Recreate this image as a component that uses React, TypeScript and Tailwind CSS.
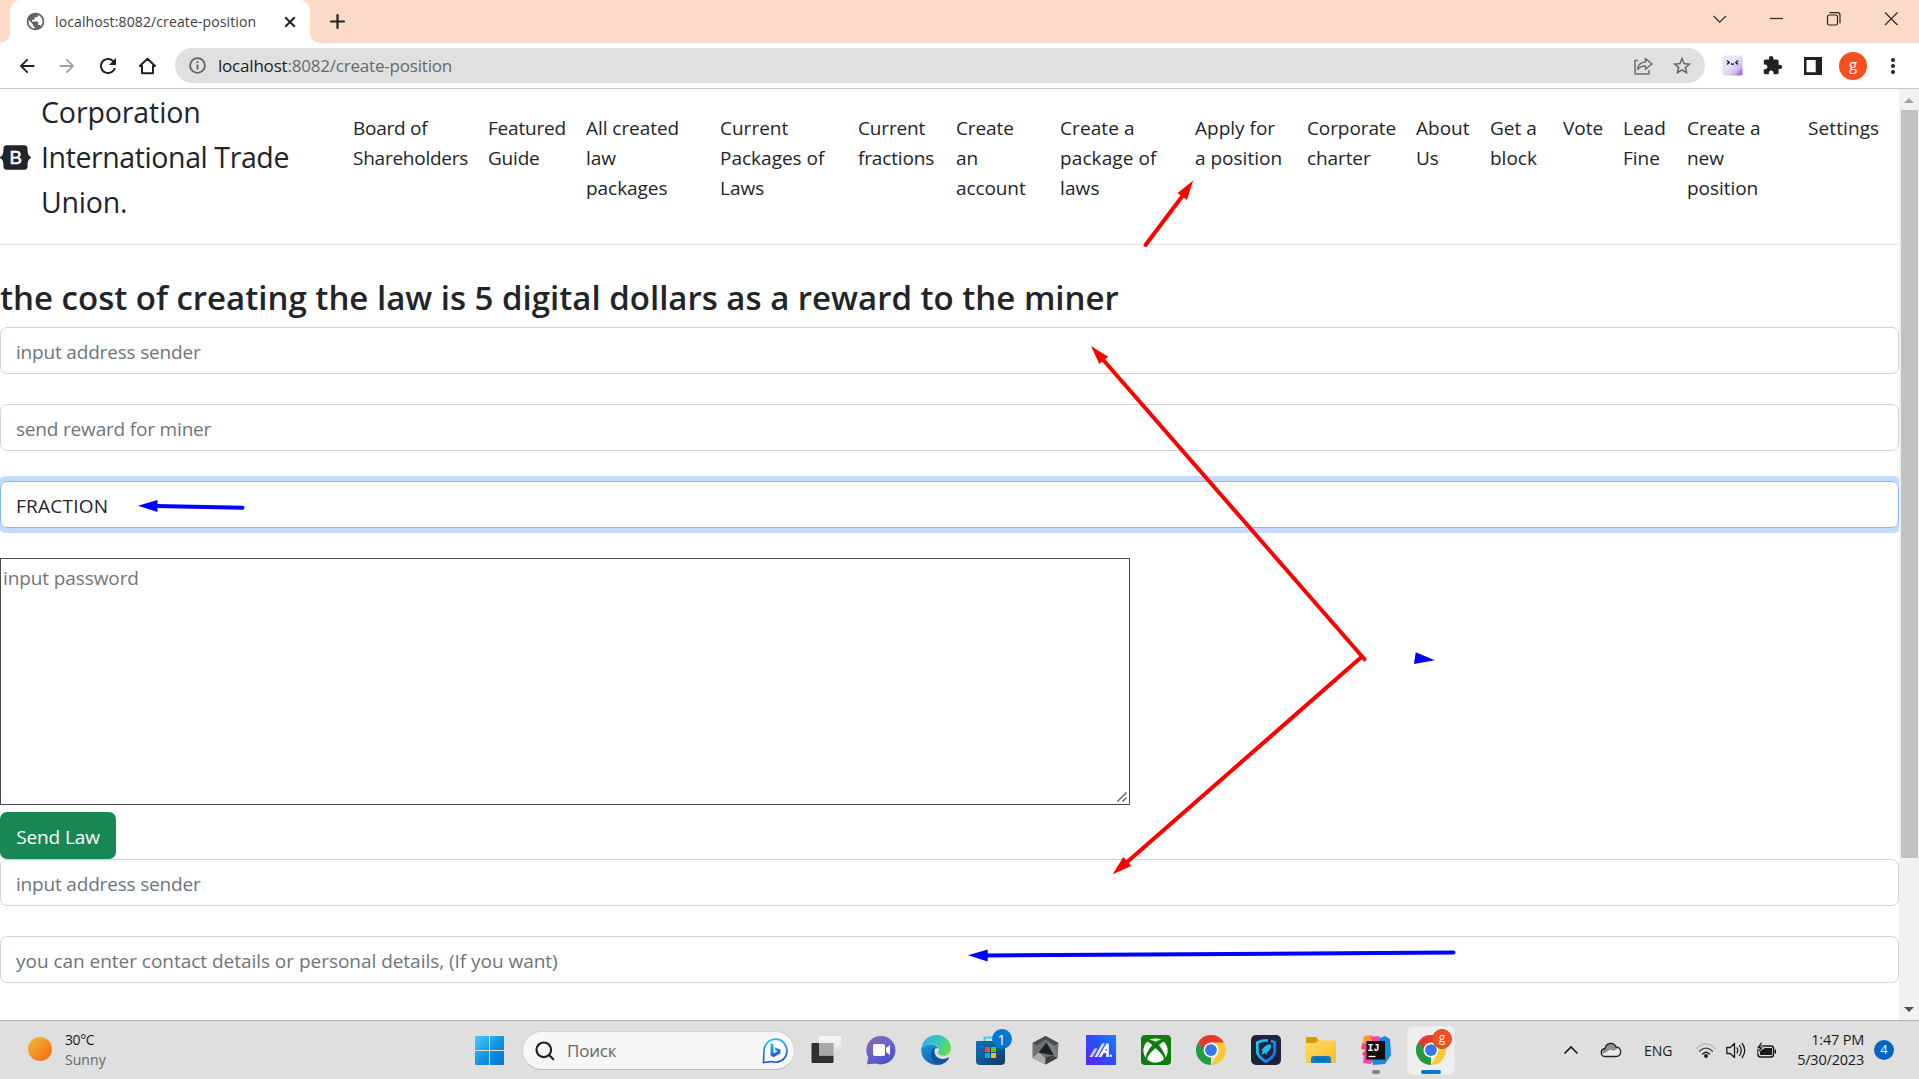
import React from "react";
import { MdArrowBack, MdArrowForward, MdExtension, MdPublic, MdRefresh, MdStarBorder } from "react-icons/md";
import { FaXbox } from "react-icons/fa";

const navItems = [
  { lines: ["Board of", "Shareholders"], width: "w-[135px] tracking-[-0.25px]" },
  { lines: ["Featured", "Guide"], width: "w-[98px] tracking-[-0.2px]" },
  { lines: ["All created", "law", "packages"], width: "w-[134px] tracking-[-0.05px]" },
  { lines: ["Current", "Packages of", "Laws"], width: "w-[138px] tracking-[0px]" },
  { lines: ["Current", "fractions"], width: "w-[98px] tracking-[-0.15px]" },
  { lines: ["Create", "an", "account"], width: "w-[104px] tracking-[-0.1px]" },
  { lines: ["Create a", "package of", "laws"], width: "w-[135px] tracking-[0.1px]" },
  { lines: ["Apply for", "a position"], width: "w-[112px] tracking-[0px]" },
  { lines: ["Corporate", "charter"], width: "w-[109px] tracking-[-0.1px]" },
  { lines: ["About", "Us"], width: "w-[74px] tracking-[0px]" },
  { lines: ["Get a", "block"], width: "w-[73px] tracking-[0px]" },
  { lines: ["Vote"], width: "w-[60px] tracking-[0px]" },
  { lines: ["Lead", "Fine"], width: "w-[64px] tracking-[0px]" },
  { lines: ["Create a", "new", "position"], width: "w-[121px] tracking-[-0.05px]" },
  { lines: ["Settings"], width: "w-[80px] tracking-[0.1px]" },
];

function TabStrip() {
  return (
    <div className="flex h-[43px] shrink-0 justify-between bg-[#fcdac8]">
      <div className="flex">
        <div className="h-[43px] w-[10px] bg-white">
          <div className="h-full w-full rounded-br-[10px] bg-[#fcdac8]" />
        </div>
        <div className="flex h-[43px] w-[300px] items-center rounded-t-[10px] bg-white pl-[15px]">
          <MdPublic className="size-[21px] text-[#5f6368]" />
          <span className="ml-[9px] w-[225px] whitespace-nowrap text-[14px] tracking-[0.12px] text-[#3c4043]">
            localhost:8082/create-position
          </span>
          <svg width="20" height="20" viewBox="0 0 20 20" stroke="#202124" strokeWidth="2">
            <path d="M5.200 5.200l9.600 9.600M14.800 5.200l-9.600 9.600" />
          </svg>
        </div>
        <div className="h-[43px] w-[10px] bg-white">
          <div className="h-full w-full rounded-bl-[10px] bg-[#fcdac8]" />
        </div>
        <svg className="mt-[13px] ml-[9px]" width="17" height="17" viewBox="0 0 17 17" stroke="#202124" strokeWidth="2.2" strokeLinecap="round">
          <path d="M8.5 2v13M2 8.5h13" />
        </svg>
      </div>
      <div className="flex h-[37px] items-center gap-[37px] pr-[18px] text-[#2b2522]">
        <svg width="20" height="20" viewBox="0 0 20 20" fill="none" stroke="currentColor" strokeWidth="1.100">
          <path d="M3.500 7l6.200 6.200L16 7" />
        </svg>
        <svg width="20" height="20" viewBox="0 0 20 20" stroke="currentColor" strokeWidth="1.200">
          <path d="M3 9.500h13" />
        </svg>
        <svg width="20" height="20" viewBox="0 0 20 20" fill="none" stroke="currentColor" strokeWidth="1.200">
          <rect x="3.500" y="6" width="10" height="10" rx="1.500" />
          <path d="M5.500 3.700h8a2.500 2.500 0 0 1 2.500 2.500v8" />
        </svg>
        <svg width="20" height="20" viewBox="0 0 20 20" stroke="currentColor" strokeWidth="1.100">
          <path d="M4 3.500l12.500 12.500M16.500 3.500L4 16" />
        </svg>
      </div>
    </div>
  );
}

function Toolbar() {
  return (
    <div className="flex h-[46px] shrink-0 items-center border-b border-[#c9c9c9] bg-white">
      <div className="flex w-[175px] items-center gap-[18px] pl-4 text-[#202124]">
        <MdArrowBack className="size-[22px]" />
        <MdArrowForward className="size-[22px] text-[#a0a0a0]" />
        <MdRefresh className="size-[24px]" />
        <svg className="-ml-px" width="20" height="20" viewBox="0 0 20 20" fill="none" stroke="currentColor" strokeWidth="2" strokeLinejoin="round">
          <path d="M2.800 10L10.500 2.800l7.500 7.200h-2v7.200h-11V10z" />
        </svg>
      </div>
      <div className="flex h-[35px] w-[1530px] items-center rounded-full bg-[#e0e0e0] pl-[14px]">
        <svg width="17" height="17" viewBox="0 0 17 17" fill="none" stroke="#5f6368" strokeWidth="1.800">
          <circle cx="8.500" cy="8.500" r="7.400" />
          <path d="M8.500 7.500v5M8.500 4.200v1.800" />
        </svg>
        <div className="ml-3 w-[1415px] text-[17px] tracking-[-0.2px] text-[#65696d]">
          <span className="text-[#202124]">localhost</span>:8082/create-position
        </div>
        <svg width="20" height="20" viewBox="0 0 20 20" fill="none" stroke="#6b6e72" strokeWidth="1.500" strokeLinejoin="round">
          <path d="M5 4.500H2V18h14v-4" />
          <path d="M4.500 13.500C5 8.500 8 6.200 12.500 6V2.500L19 8l-6.500 5.200V9.900C9 9.800 6.500 11 4.500 13.500z" />
        </svg>
        <MdStarBorder className="ml-[18px] size-[22px] text-[#5f6368]" />
      </div>
      <div className="flex items-center pl-[17px] text-[#202124]">
        <svg width="21" height="21" viewBox="0 0 21 21">
          <defs>
            <linearGradient id="ext" x1="0" y1="0" x2="1" y2="1">
              <stop offset="0.450" stopColor="#e3e6f6" />
              <stop offset="0.750" stopColor="#cdb5ef" />
              <stop offset="1" stopColor="#9640dc" />
            </linearGradient>
          </defs>
          <rect x="0.500" y="0.500" width="20" height="20" rx="2" fill="url(#ext)" />
          <path d="M5 5.500l2.200 2L5 9.400M16 5.500l-2.200 2 2.200 1.900M9 8.500q1.500 1.800 3 0" fill="none" stroke="#20222e" strokeWidth="1.400" />
        </svg>
        <MdExtension className="ml-[19px] size-[21px]" />
        <svg className="ml-[21px]" width="18" height="18" viewBox="0 0 18 18">
          <path d="M0 0h18v18H0zM2.500 3v12.200h9.200V3z" fill="#202124" fillRule="evenodd" />
        </svg>
        <div className="ml-[17px] flex size-7 items-center justify-center rounded-full bg-[#f4511e] pb-[3px] text-[15px] text-white">g</div>
        <svg className="ml-[23px]" width="6" height="18" viewBox="0 0 6 18" fill="#202124">
          <circle cx="3" cy="3" r="2" />
          <circle cx="3" cy="9" r="2" />
          <circle cx="3" cy="15" r="2" />
        </svg>
      </div>
    </div>
  );
}

function Field({ text, className = "tracking-[-0.18px]" }: { text: string; className?: string }) {
  return (
    <div className={`flex h-[47px] shrink-0 items-center rounded-[7px] border border-[#ced4da] bg-white pt-1 pl-[15px] text-[19px] text-[#6c757d] ${className}`}>
      {text}
    </div>
  );
}

function PageHeader() {
  return (
    <header className="flex h-[156px] shrink-0 items-start border-b border-[#dee2e6] text-[#212529]">
      <div className="flex w-[353px] items-center">
        <svg className="mt-[1px] shrink-0" width="31" height="25" viewBox="0 0 118 94">
          <path
            fill="#212529"
            d="M24.509 0c-6.733 0-11.715 5.893-11.492 12.284.214 6.14-.064 14.092-2.066 20.577C8.943 39.365 5.547 43.485 0 44.014v5.972c5.547.529 8.943 4.649 10.951 11.153 2.002 6.485 2.28 14.437 2.066 20.577C12.794 88.106 17.776 94 24.51 94H93.5c6.733 0 11.714-5.893 11.491-12.284-.214-6.14.064-14.092 2.066-20.577 2.009-6.504 5.396-10.624 10.943-11.153v-5.972c-5.547-.529-8.934-4.649-10.943-11.153-2.002-6.484-2.28-14.437-2.066-20.577C105.214 5.894 100.233 0 93.5 0H24.508z"
          />
          <text x="60" y="72" textAnchor="middle" fontFamily="Liberation Sans" fontSize="71" fill="#fff" stroke="#fff" strokeWidth="2">B</text>
        </svg>
        <div className="ml-[10px] pt-px text-[28.5px] leading-[45px]">
          <div className="tracking-[-0.1px]">Corporation</div>
          <div className="whitespace-nowrap tracking-[-0.4px]">International Trade</div>
          <div className="tracking-[-0.2px]">Union.</div>
        </div>
      </div>
      <nav className="flex pt-6 text-[19px] leading-[30px]">
        {navItems.map((item, i) => (
          <a key={i} className={`${item.width} shrink-0 whitespace-nowrap`}>
            {item.lines.map((line) => (
              <span key={line} className="block">{line}</span>
            ))}
          </a>
        ))}
      </nav>
    </header>
  );
}

function Page() {
  return (
    <main className="flex w-[1899px] flex-col overflow-hidden">
      <PageHeader />
      <h1 className="mt-[31px] h-[51px] shrink-0 whitespace-nowrap text-[33px] leading-[44px] font-semibold text-[#212529]">
        the cost of creating the law is 5 digital dollars as a reward to the miner
      </h1>
      <div className="flex flex-col gap-[30px]">
        <Field text="input address sender" />
        <Field text="send reward for miner" />
        <div className="flex h-[47px] items-center rounded-[7px] border border-[#86b7fe] pt-1 pl-[15px] text-[19px] tracking-[0.25px] text-[#212529] shadow-[0_0_0_5px_#c2dbfe]">
          FRACTION
        </div>
      </div>
      <div className="mt-[30px] flex h-[247px] w-[1130px] shrink-0 justify-between border border-[#4a4a4a] pt-1 pl-[2px] text-[19px] leading-[30px] tracking-[-0.1px] text-[#757575]">
        input password
        <svg className="mr-[1px] mb-[1px] self-end" width="12" height="12" viewBox="0 0 12 12" stroke="#555" strokeWidth="1.300">
          <path d="M1.500 10.500l9-9M6.500 10.500l4-4" />
        </svg>
      </div>
      <button className="mt-[7px] h-[47px] w-[116px] shrink-0 rounded-[7px] bg-[#198754] pt-[3px] text-[19px] tracking-[-0.1px] text-white">Send Law</button>
      <div className="flex flex-col gap-[30px]">
        <Field text="input address sender" />
        <Field text="you can enter contact details or personal details, (If you want)" className="tracking-[-0.03px]" />
      </div>
    </main>
  );
}

function Scrollbar() {
  return (
    <div className="flex w-5 flex-col items-center justify-between bg-[#f1f1f1]">
      <div className="flex flex-col items-center">
        <svg className="mt-[9px]" width="10" height="5" viewBox="0 0 10 5" fill="#a3a3a3"><path d="M0 5l5-5 5 5z" /></svg>
        <div className="mt-[7px] h-[748px] w-[17px] bg-[#c1c1c1]" />
      </div>
      <svg className="mb-2" width="10" height="5" viewBox="0 0 10 5" fill="#505050"><path d="M0 0l5 5 5-5z" /></svg>
    </div>
  );
}

function Annotations() {
  return (
    <svg className="pointer-events-none absolute inset-0" width="1919" height="1079" viewBox="0 0 1919 1079">
      <g stroke="#f00" fill="#f00" strokeWidth="4" strokeLinecap="round">
        <path d="M1145.500 245L1184 194" />
        <path d="M1193 180.700l-15.500 12.300 9.500 7z" stroke="none" />
        <path d="M1364.500 659.300L1102 358.500" />
        <path d="M1091 346l17 10.700-8.700 7.300z" stroke="none" />
        <path d="M1362 656.500L1126 863" />
        <path d="M1112.700 874.300l10.600-17.300 8 9z" stroke="none" />
      </g>
      <g stroke="#00f" fill="#00f" strokeWidth="4" strokeLinecap="round">
        <path d="M156 506l86.500 1.700" />
        <path d="M138 505.700l19.500-5.700v12z" stroke="none" />
        <path d="M986 955.500l467.500-3" />
        <path d="M968 955.300l19.700-5.800v12z" stroke="none" />
        <path d="M1415.700 652.300l-1.700 11.700 20.700-3.700z" stroke="none" />
      </g>
    </svg>
  );
}

function ChromeLogo() {
  return (
    <svg width="30" height="30" viewBox="0 0 48 48">
      <path d="M24 24L3.200 12A24 24 0 0 1 44.800 12z" fill="#e33b2e" />
      <path d="M24 24L24 48A24 24 0 0 1 3.200 12L13.600 30z" fill="#249a41" />
      <path d="M24 12h20.800A24 24 0 0 1 24 48L34.400 30z" fill="#fcc934" />
      <path d="M3.200 12L13.600 30L24 24V12z" fill="#e33b2e" />
      <path d="M3.200 12L13.600 30L16 24z" fill="#249a41" />
      <circle cx="24" cy="24" r="12" fill="#fff" />
      <circle cx="24" cy="24" r="9.400" fill="#3179ed" />
    </svg>
  );
}

function TaskViewIcon() {
  return (
    <svg width="30" height="30" viewBox="0 0 30 30">
      <defs><linearGradient id="pane" x1="0" y1="0" x2="0" y2="1"><stop stopColor="#fbfbfb" /><stop offset="1" stopColor="#d6d6d6" /></linearGradient></defs>
      <rect x="0.500" y="8" width="22" height="20" rx="1" fill="#30302e" />
      <rect x="8" y="1" width="22" height="19.500" rx="1" fill="url(#pane)" />
      <rect x="8" y="8" width="14.500" height="12.500" fill="#a9a9a9" />
    </svg>
  );
}

function ChatIcon() {
  return (
    <svg width="30" height="30" viewBox="0 0 30 30">
      <defs><linearGradient id="chat" x1="0" y1="0" x2="0.600" y2="1"><stop stopColor="#9664a4" /><stop offset="0.500" stopColor="#6a63cc" /><stop offset="1" stopColor="#4d55c8" /></linearGradient></defs>
      <path d="M15 1a14.200 14.200 0 1 1-5 27.400L1 29.200l1.200-7A14.200 14.200 0 0 1 15 1z" fill="url(#chat)" />
      <rect x="7" y="9" width="12" height="12" rx="1.800" fill="#fff" />
      <path d="M20 13l4-3v10l-4-3z" fill="#fff" />
    </svg>
  );
}

function EdgeIcon() {
  return (
    <svg width="30" height="30" viewBox="0 0 256 256">
      <defs>
        <linearGradient id="e1" x1="0" y1="0.300" x2="1" y2="0.600"><stop stopColor="#2bb4ec" /><stop offset="0.550" stopColor="#35c9b5" /><stop offset="1" stopColor="#67e04b" /></linearGradient>
        <linearGradient id="e2" x1="0" y1="0" x2="0.300" y2="1"><stop stopColor="#1b98db" /><stop offset="1" stopColor="#0d69bb" /></linearGradient>
      </defs>
      <path d="M2 118C10 48 65 0 130 0c74 0 126 52 126 112 0 42-32 64-66 64-30 0-48-10-48-20 0-8 11-12 11-32 0-30-30-50-65-50-42 0-72 20-86 44z" fill="url(#e1)" />
      <path d="M2 118c14-24 44-40 80-40 35 0 62 16 68 38-20-10-46 5-50 34-6 46 36 104 52 105-82 6-156-50-150-137z" fill="url(#e2)" />
      <path d="M120 105c-24 11-38 40-34 70 6 42 36 72 66 80 39-5 67-27 85-53 4-7-2-11-8-8-70 33-132-12-109-89z" fill="#10529c" />
    </svg>
  );
}

function StoreIcon() {
  return (
    <div className="relative">
      <svg width="30" height="30" viewBox="0 0 30 30">
        <defs><linearGradient id="store" x1="0" y1="0" x2="1" y2="1"><stop stopColor="#0676bd" /><stop offset="1" stopColor="#143963" /></linearGradient></defs>
        <path d="M8.500 7V2.500h12V7" fill="none" stroke="#3cc9ee" strokeWidth="2" />
        <path d="M0 7q0-1 1-1h27q1 0 1 1v19q0 4-4 4H4q-4 0-4-4z" fill="url(#store)" />
        <path d="M9 12h5v5H9z" fill="#f25022" /><path d="M15 12h5v5h-5z" fill="#7fba00" />
        <path d="M9 18h5v5H9z" fill="#00a4ef" /><path d="M15 18h5v5h-5z" fill="#ffb900" />
      </svg>
      <div className="absolute -top-[6px] -right-[6px] flex size-5 items-center justify-center rounded-full bg-[#0078d4] text-[14px] text-white">1</div>
    </div>
  );
}

function ArmouryIcon() {
  return (
    <svg width="30" height="30" viewBox="0 0 30 30">
      <path d="M14.500 1l13 7-1 15-12 6.500L1.500 23V8z" fill="#6d7276" />
      <path d="M14.500 1l13 7-4.500 3-8.500-6.500L6 10 1.500 8z" fill="#484d51" />
      <path d="M14.500 4.500L23 11l3.500 12-6-2.500z" fill="#7b8084" />
      <path d="M15.500 7.500l7.500 13-15.500-3z" fill="#1d2023" />
      <path d="M1.500 23L7.500 17.500 14.500 23v6.500z" fill="#a9adae" />
      <path d="M14.500 22L22 21l4.500 2-12 6.500z" fill="#3a3f43" />
    </svg>
  );
}

function AsusIcon() {
  return (
    <svg width="30" height="30" viewBox="0 0 30 30">
      <defs><linearGradient id="asus" x1="1" y1="0" x2="0" y2="1"><stop stopColor="#1783ff" /><stop offset="0.450" stopColor="#284fff" /><stop offset="1" stopColor="#6222ed" /></linearGradient></defs>
      <path d="M0 0h30v30H0z" fill="url(#asus)" />
      <path d="M3.500 22L8.500 13.500h3L6.500 22z" fill="#c9d3ff" />
      <path d="M8.500 22L16 8.500h2.800L11.300 22z" fill="#e6ebff" />
      <path d="M12.500 22L20.500 8.500h2.300V22h-2.600v-4h-2.500L15.300 22z" fill="#fff" />
      <circle cx="20.300" cy="14.800" r="0.900" fill="#2b55fb" />
      <circle cx="24.800" cy="20.700" r="1.200" fill="#fff" />
    </svg>
  );
}

function ShieldIcon() {
  return (
    <svg width="30" height="30" viewBox="0 0 30 30">
      <defs><linearGradient id="shield" x1="0" y1="0" x2="1" y2="0.600"><stop stopColor="#22d3ef" /><stop offset="1" stopColor="#1675fb" /></linearGradient></defs>
      <rect width="30" height="30" rx="5" fill="#1f2339" />
      <path d="M17 5.300C13 5.300 9 6 6.300 7.600v8.600c0 4.500 3.500 7.500 8.700 10.300 5.200-2.800 8.700-5.800 8.700-10.300V7.600c-1-.7-2.200-1.200-3.700-1.600" fill="none" stroke="url(#shield)" strokeWidth="2.800" />
      <path d="M20 9.500c-4-.3-6.500 1.500-8 4.200l-2.500 1.100 2.300.8-1.800 4.400 4.200-2 1 2.600 1-3.500c2.800-1.600 4.200-4.200 3.800-7.600z" fill="#22b9f4" />
    </svg>
  );
}

function FolderIcon() {
  return (
    <svg width="30" height="30" viewBox="0 0 30 30">
      <defs><linearGradient id="folder" x1="0" y1="0" x2="1" y2="1"><stop stopColor="#ffdc66" /><stop offset="1" stopColor="#f8bd28" /></linearGradient></defs>
      <path d="M0 3q0-1 1-1h9l3 3.500L10 9H0z" fill="#d69c08" />
      <path d="M0 8h9l4-2.500h16q1 0 1 1V28H0z" fill="url(#folder)" />
      <path d="M5 28v-4q0-3 3-3h14q3 0 3 3v4z" fill="#1479c8" />
      <path d="M9.500 24.500h11" stroke="#0a559c" strokeWidth="1.500" />
    </svg>
  );
}

function IntelliJIcon() {
  return (
    <svg width="30" height="30" viewBox="0 0 30 30">
      <path d="M3 1l7-1 5 3-8 8-6-2z" fill="#ff9b2b" />
      <path d="M1 9l7-1v18l-7-7 3-4-4-1z" fill="#fc3f7d" />
      <path d="M9 2l8-1 6 4-10 4z" fill="#f342b6" />
      <path d="M19 3l5-2 5 3 1 16-6 9-12 1-1-6z" fill="#168be5" />
      <path d="M3 21l10 3-3 5-8-1z" fill="#ed43aa" />
      <path d="M5.500 6h18.500v18.500H5.500z" fill="#100c0c" />
      <text x="6.500" y="15.500" fontFamily="Liberation Mono" fontWeight="700" fontSize="10" fill="#fff">IJ</text>
      <path d="M7.500 21.500h7" stroke="#fff" strokeWidth="1.300" />
    </svg>
  );
}

function XboxIcon() {
  return (
    <div className="flex size-[30px] items-center justify-center rounded-[4px] bg-[#107c10]">
      <FaXbox className="size-[25px] text-white" />
    </div>
  );
}

const apps = [TaskViewIcon, ChatIcon, EdgeIcon, StoreIcon, ArmouryIcon, AsusIcon, XboxIcon, ChromeLogo, ShieldIcon, FolderIcon];

function Taskbar() {
  return (
    <footer className="flex h-[59px] shrink-0 border-t border-[#b2b2b2] bg-[#dfdfdf]">
      <div className="flex w-[475px] shrink-0 items-start pl-7">
        <div className="mt-4 size-6 rounded-full bg-linear-to-br from-[#edbc36] to-[#f3650d]" />
        <div className="mt-[9px] ml-[13px] text-[14px] leading-5">
          <div className="tracking-[-0.4px] text-[#1b1b1b]">30°C</div>
          <div className="tracking-[0.05px] text-[#666]">Sunny</div>
        </div>
      </div>
      <div className="flex w-[1089px] shrink-0 items-start">
        <svg className="mt-[15px] shrink-0" width="29" height="29" viewBox="0 0 29 29">
          <defs><linearGradient id="win" x1="0" y1="0" x2="1" y2="1"><stop stopColor="#46cdfc" /><stop offset="0.550" stopColor="#1190e2" /><stop offset="1" stopColor="#0873cf" /></linearGradient></defs>
          <path d="M1 0h13v14H0V1q0-1 1-1zM15 0h13q1 0 1 1v13H15zM0 15h14v14H1q-1 0-1-1zM15 15h14v13q0 1-1 1H15z" fill="url(#win)" />
        </svg>
        <div className="mt-[10px] ml-[18px] flex h-[39px] w-[273px] shrink-0 items-center rounded-full border border-[#d2d2d2] border-b-[#bdbdbd] bg-[#f7f7f7] pl-[12px]">
          <svg width="20" height="20" viewBox="0 0 20 20" fill="none" stroke="#222" strokeWidth="2.200" strokeLinecap="round">
            <circle cx="8.800" cy="8.800" r="7.300" /><path d="M14 14l4.300 4.300" />
          </svg>
          <span className="ml-3 w-[195px] text-[17px] tracking-[-0.2px] text-[#666]">Поиск</span>
          <svg width="26" height="26" viewBox="0 0 26 26">
            <defs><linearGradient id="bing" x1="0" y1="0" x2="0.200" y2="1"><stop stopColor="#20c9f4" /><stop offset="0.600" stopColor="#287fe8" /><stop offset="1" stopColor="#1955c5" /></linearGradient></defs>
            <path d="M13.500 1.200a11.500 11.500 0 1 1-4 22.300L1.500 24.500l.5-12A11.500 11.500 0 0 1 13.500 1.200z" fill="#fff" stroke="url(#bing)" strokeWidth="1.700" />
            <path d="M8.500 5l3 1.200v9.300l4-2.300-2-.9-1.200-3L18.500 11.500v3.800l-7 4-3-2z" fill="url(#bing)" />
          </svg>
        </div>
        <div className="flex pl-[3px]">
          {apps.map((App, i) => (
            <div key={i} className="flex w-[55px] shrink-0 justify-center pt-[14px]"><App /></div>
          ))}
          <div className="flex w-[55px] shrink-0 flex-col items-center pt-[14px]">
            <IntelliJIcon />
            <div className="mt-[5px] h-1 w-2 rounded-full bg-[#858585]" />
          </div>
          <div className="mt-[5px] ml-[4px] flex h-[49px] w-12 shrink-0 flex-col items-center rounded-[5px] border border-[#e9e9e9] bg-[#eeeeee] pt-2">
            <div className="relative">
              <ChromeLogo />
              <div className="absolute -top-[6px] -right-[6px] flex size-5 items-center justify-center rounded-full border border-[#c8502d] bg-[#f4511e] pb-0.5 text-[12px] text-white">g</div>
            </div>
            <div className="mt-[5px] h-1 w-5 shrink-0 rounded-full bg-[#0078d4]" />
          </div>
        </div>
      </div>
      <div className="flex h-[58px] w-[355px] shrink-0 items-center text-[#1b1b1b]">
        <svg width="14" height="8" viewBox="0 0 14 8" fill="none" stroke="currentColor" strokeWidth="1.700" strokeLinecap="round" className="shrink-0"><path d="M1 7l6-6 6 6" /></svg>
        <svg className="ml-[22px] shrink-0" width="22" height="16" viewBox="0 0 22 16" strokeWidth="1.300">
          <path d="M5.500 14.500C0 14.500 0 7 5 6.500 6.500 0 14 0 16 5c6 0 6.500 9.500 0 9.500z" fill="#ededed" />
          <path d="M3 12q-2.500-4 2-5.500C6.500 0 14 0 16 5l2.500 1-5 3-3-1.500z" fill="#8f8f8f" />
          <path d="M5.500 14.500C0 14.500 0 7 5 6.500 6.500 0 14 0 16 5c6 0 6.500 9.500 0 9.500z" fill="none" stroke="#222" />
        </svg>
        <span className="ml-[22px] w-[52px] text-[14px]">ENG</span>
        <svg className="shrink-0" width="20" height="15" viewBox="0 0 20 15" fill="none" strokeWidth="1.300" strokeLinecap="round">
          <path d="M.8 5.500C6-.5 14-.5 19.200 5.500" stroke="#b8b8b8" /><path d="M3.500 8.300c4-4.300 9-4.300 13 0" stroke="#444" /><path d="M6.500 11c2.300-2.300 4.700-2.300 7 0" stroke="#222" /><circle cx="10" cy="13" r="1.300" fill="#222" stroke="#222" />
        </svg>
        <svg className="ml-[10px] shrink-0" width="20" height="17" viewBox="0 0 20 17" fill="none" stroke="currentColor" strokeWidth="1.300" strokeLinejoin="round" strokeLinecap="round">
          <path d="M.8 5.500h3.500L8.500 1.500v14l-4.200-4H.8z" /><path d="M11 6q1.500 2.500 0 5M13.500 3.500q3.500 5 0 10M16.200 1.500q5 7 0 14" />
        </svg>
        <svg className="ml-[10px] shrink-0" width="21" height="17" viewBox="0 0 21 17">
          <rect x="2" y="4" width="15.500" height="11" rx="2.500" fill="none" stroke="#1b1b1b" strokeWidth="1.500" />
          <path d="M4 13V9l5-3h7v7zM18.500 7.500h1.500v4h-1.500z" fill="#1b1b1b" />
          <path d="M5 0L0.500 6.500h2.800l-1.300 5L7.500 5H4.700L6.500 0z" fill="#1b1b1b" stroke="#dfdfdf" strokeWidth="0.700" />
        </svg>
        <div className="w-[87px] text-right text-[14.500px] leading-5 tracking-[-0.2px]">
          <div>1:47 PM</div><div>5/30/2023</div>
        </div>
        <div className="ml-[10px] flex size-5 items-center justify-center rounded-full bg-[#0067c0] text-[13px] text-white">4</div>
      </div>
    </footer>
  );
}

export default function App() {
  return (
    <div className="relative flex h-[1079px] w-[1919px] flex-col overflow-hidden bg-white font-['Open_Sans',sans-serif]">
      <TabStrip />
      <Toolbar />
      <div className="flex h-[931px] shrink-0">
        <Page />
        <Scrollbar />
      </div>
      <Taskbar />
      <Annotations />
    </div>
  );
}
